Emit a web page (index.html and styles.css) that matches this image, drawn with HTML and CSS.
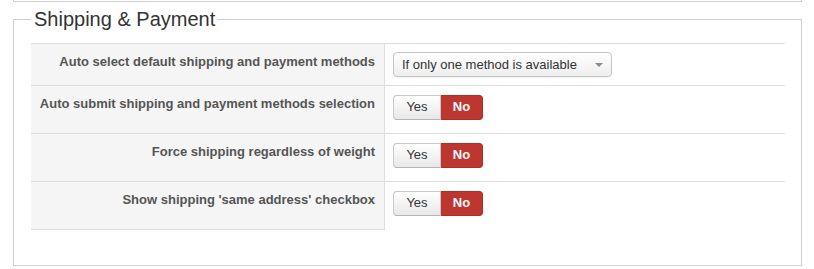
FILE: index.html
```html
<!DOCTYPE html>
<html>
<head>
<meta charset="utf-8">
<link rel="stylesheet" href="styles.css">
</head>
<body>
<div class="prev-box"></div>
<fieldset class="panel">
  <legend class="panel-title">Shipping &amp; Payment</legend>
  <div class="settings">
    <div class="row short">
      <div class="label">Auto select default shipping and payment methods</div>
      <div class="value">
        <div class="select">If only one method is available<span class="caret"></span></div>
      </div>
    </div>
    <div class="row">
      <div class="label">Auto submit shipping and payment methods selection</div>
      <div class="value">
        <div class="toggle"><span class="btn yes">Yes</span><span class="btn no">No</span></div>
      </div>
    </div>
    <div class="row">
      <div class="label">Force shipping regardless of weight</div>
      <div class="value">
        <div class="toggle"><span class="btn yes">Yes</span><span class="btn no">No</span></div>
      </div>
    </div>
    <div class="row last">
      <div class="label">Show shipping 'same address' checkbox</div>
      <div class="value">
        <div class="toggle"><span class="btn yes">Yes</span><span class="btn no">No</span></div>
      </div>
    </div>
  </div>
</fieldset>
</body>
</html>
```
FILE: styles.css
```css
html, body {
  margin: 0;
  padding: 0;
  background: #fff;
}
body {
  font-family: "Liberation Sans", Arial, sans-serif;
  font-size: 13px;
  line-height: 18px;
  color: #333;
}
.prev-box {
  margin: 0 12px 0 13px;
  height: 1px;
  border: 1px solid #cfcfcf;
  border-top: 0;
}
.panel {
  margin: 5px 12px 0 13px;
  border: 1px solid #cfcfcf;
  padding: 0 16px 36px 17px;
}
.panel-title {
  font-size: 20px;
  line-height: 24px;
  color: #333;
  padding: 0 2px 0 3px;
  margin: 0;
}
.settings {
  margin-top: 12px;
}
.row {
  display: flex;
  height: 48px;
  box-sizing: border-box;
  border-top: 1px solid #dddddd;
}
.row.short {
  height: 42px;
}
.label {
  width: 354px;
  flex: none;
  box-sizing: border-box;
  background: #f5f5f5;
  border-right: 1px solid #dddddd;
  padding: 9px 9px 0 0;
  text-align: right;
  font-weight: bold;
  color: #555;
}
.row.last .label {
  border-bottom: 1px solid #dddddd;
  height: 48px;
}
.value {
  flex: 1;
  padding: 8px 0 0 8px;
}
.select {
  position: relative;
  width: 217px;
  height: 23px;
  box-sizing: content-box;
  border: 1px solid #c4c4c4;
  border-radius: 4px;
  background: linear-gradient(#ffffff, #eeeeee);
  padding: 0;
  text-indent: 8px;
  line-height: 23px;
  color: #333;
  box-shadow: 0 1px 1px rgba(0,0,0,0.05);
}
.caret {
  position: absolute;
  right: 8px;
  top: 10px;
  width: 0;
  height: 0;
  border-left: 4px solid transparent;
  border-right: 4px solid transparent;
  border-top: 4px solid #8a8a8a;
}
.toggle {
  display: flex;
  margin-top: 1px;
}
.btn {
  display: block;
  height: 18px;
  padding: 2px 0 3px;
  line-height: 18px;
  text-align: center;
}
.btn.yes {
  width: 46px;
  border: 1px solid #c8c8c8;
  border-bottom-color: #b3b3b3;
  border-radius: 4px 0 0 4px;
  background: linear-gradient(#ffffff, #e8e8e8);
  color: #333;
}
.btn.no {
  border: 1px solid #a8302a;
  border-left: 0;
  width: 41px;
  border-radius: 0 4px 4px 0;
  background: #bd362f;
  color: #fff;
  font-weight: bold;
}
```
